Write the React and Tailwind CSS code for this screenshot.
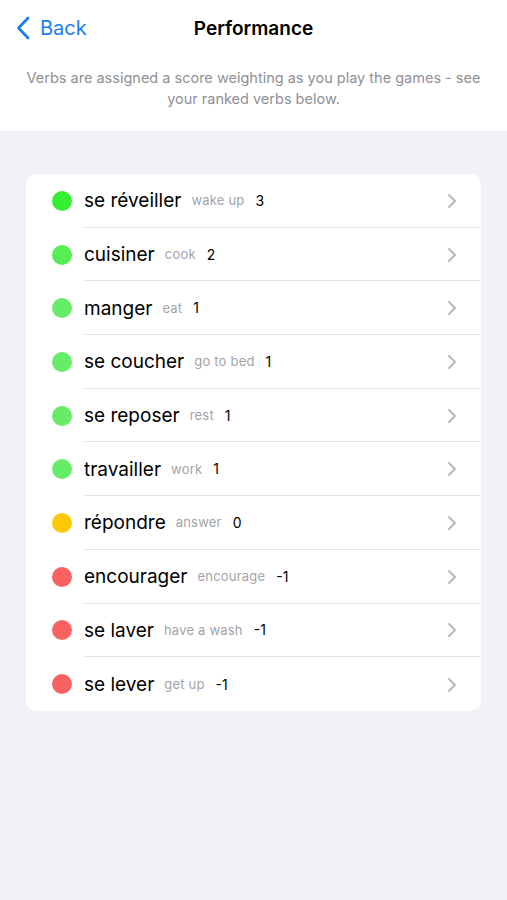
import React from "react";

const rows = [
  { verb: "se réveiller", tr: "wake up", score: "3", color: "bg-[#35ef35]" },
  { verb: "cuisiner", tr: "cook", score: "2", color: "bg-[#55ee55]" },
  { verb: "manger", tr: "eat", score: "1", color: "bg-[#66ec66]" },
  { verb: "se coucher", tr: "go to bed", score: "1", color: "bg-[#66ec66]" },
  { verb: "se reposer", tr: "rest", score: "1", color: "bg-[#66ec66]" },
  { verb: "travailler", tr: "work", score: "1", color: "bg-[#66ec66]" },
  { verb: "répondre", tr: "answer", score: "0", color: "bg-[#fdc905]" },
  { verb: "encourager", tr: "encourage", score: "-1", color: "bg-[#fa6262]" },
  { verb: "se laver", tr: "have a wash", score: "-1", color: "bg-[#fa6262]" },
  { verb: "se lever", tr: "get up", score: "-1", color: "bg-[#fa6262]" },
];

export default function App() {
  return (
    <div className="w-[507px] h-[900px] bg-[#f1f1f6] font-['Inter','Liberation_Sans',sans-serif] text-black">
      <div className="bg-white h-[131px] flex flex-col">
        <div className="relative h-[56px] flex items-center justify-center">
          <div className="absolute left-[16px] top-[15px] flex items-center gap-[10px] text-[#1a7ef2]">
            <svg width="14" height="24" viewBox="0 0 14 24" fill="none">
              <path d="M12 2 L2.5 12 L12 22" stroke="#1a7ef2" strokeWidth="2.8" strokeLinecap="round" strokeLinejoin="round" />
            </svg>
            <span className="text-[20px] leading-[26px]">Back</span>
          </div>
          <span className="text-[19px] font-semibold leading-[26px] mt-[1px]">Performance</span>
        </div>
        <p className="mt-[11px] px-[16px] text-center text-[14.5px] leading-[21px] text-[#909095]">
          Verbs are assigned a score weighting as you play the games - see
          <br />
          your ranked verbs below.
        </p>
      </div>
      <div className="mx-[26px] mt-[43px] bg-white rounded-[10px] overflow-hidden">
        {rows.map((r, i) => (
          <div key={i} className="flex items-center h-[53.7px] relative">
            <div className={`w-[20px] h-[20px] rounded-full ${r.color} ml-[26px] mr-[12px] shrink-0`} />
            <div className={`flex-1 flex items-center h-full pt-[1px] ${i < rows.length - 1 ? "border-b border-[#e3e3e8]" : ""}`}>
              <span className="text-[19px] leading-none">{r.verb}</span>
              <span className="ml-[10px] text-[13px] text-[#a3a3a8] leading-none tracking-[0.2px]">{r.tr}</span>
              <span className="ml-[11px] text-[14px] leading-none">{r.score}</span>
              <span className="flex-1" />
              <svg className="mr-[24px]" width="10" height="16" viewBox="0 0 10 16" fill="none">
                <path d="M2 2 L8 8 L2 14" stroke="#b8b8bd" strokeWidth="2" strokeLinecap="round" strokeLinejoin="round" />
              </svg>
            </div>
          </div>
        ))}
      </div>
    </div>
  );
}
